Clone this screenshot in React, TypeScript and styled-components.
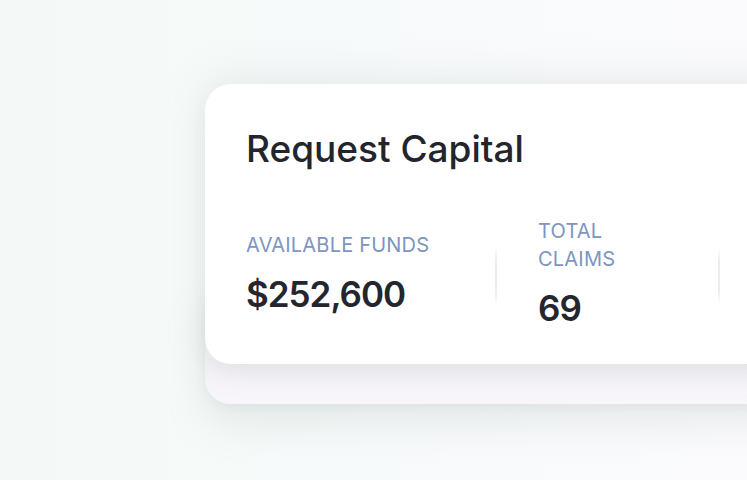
import React from "react";
import styled, { createGlobalStyle } from "styled-components";

const Global = createGlobalStyle`
  html, body { margin: 0; padding: 0; }
  body {
    width: 747px;
    height: 480px;
    overflow: hidden;
    font-family: Inter, "Noto Sans", sans-serif;
    background: linear-gradient(90deg, #f4f9f7 0%, #f7fafa 45%, #fbfbfd 100%);
  }
`;

const Stage = styled.div`
  position: relative;
  width: 747px;
  height: 480px;
  overflow: hidden;
  padding: 84px 0 0 205px;
  box-sizing: border-box;
`;

const Stack = styled.div`
  position: relative;
  width: 700px;
`;

const BackLayer = styled.div`
  position: absolute;
  left: 0;
  right: 0;
  top: 200px;
  height: 120px;
  border-radius: 26px;
  background: linear-gradient(180deg, #e9e6ee 0%, #f2f0f6 45%, #f8f6fa 100%);
  box-shadow: 0 18px 40px rgba(150, 165, 160, 0.2), 0 4px 10px rgba(160, 170, 170, 0.12);
`;

const Card = styled.div`
  position: relative;
  height: 280px;
  box-sizing: border-box;
  padding: 43px 0 0 41px;
  border-radius: 26px;
  background: #ffffff;
  box-shadow: 0 -6px 40px rgba(170, 178, 180, 0.2), 0 8px 18px rgba(170, 172, 180, 0.14);
`;

const Title = styled.h1`
  margin: 0;
  font-size: 37px;
  line-height: 44px;
  font-weight: 500;
  letter-spacing: 0;
  color: #23242c;
`;

const Stats = styled.div`
  display: flex;
  align-items: center;
  margin-top: 46px;
`;

const Stat = styled.div<{ $width: number; $pad: number }>`
  width: ${(p) => p.$width}px;
  padding-left: ${(p) => p.$pad}px;
  box-sizing: border-box;
  display: flex;
  flex-direction: column;
  gap: 14px;
`;

const Label = styled.div<{ $max?: number }>`
  font-size: 20px;
  line-height: 28px;
  font-weight: 400;
  letter-spacing: 0.2px;
  color: #7d95bf;
  text-transform: uppercase;
  ${(p) => (p.$max ? `max-width: ${p.$max}px;` : "")}
`;

const Value = styled.div`
  font-size: 35px;
  line-height: 42px;
  font-weight: 600;
  letter-spacing: -1px;
  color: #25262d;
`;

const Divider = styled.div`
  width: 2px;
  height: 58px;
  align-self: center;
  margin-top: 6px;
  background: linear-gradient(180deg, rgba(232,230,242,0) 0%, #eceaf3 25%, #eceaf3 75%, rgba(232,230,242,0) 100%);
`;

export default function App() {
  return (
    <>
      <Global />
      <Stage>
        <Stack>
          <BackLayer />
          <Card>
            <Title>Request Capital</Title>
            <Stats>
              <Stat $width={249} $pad={0}>
                <Label>Available Funds</Label>
                <Value>$252,600</Value>
              </Stat>
              <Divider />
              <Stat $width={221} $pad={41}>
                <Label $max={130}>Total Claims</Label>
                <Value>69</Value>
              </Stat>
              <Divider />
            </Stats>
          </Card>
        </Stack>
      </Stage>
    </>
  );
}
